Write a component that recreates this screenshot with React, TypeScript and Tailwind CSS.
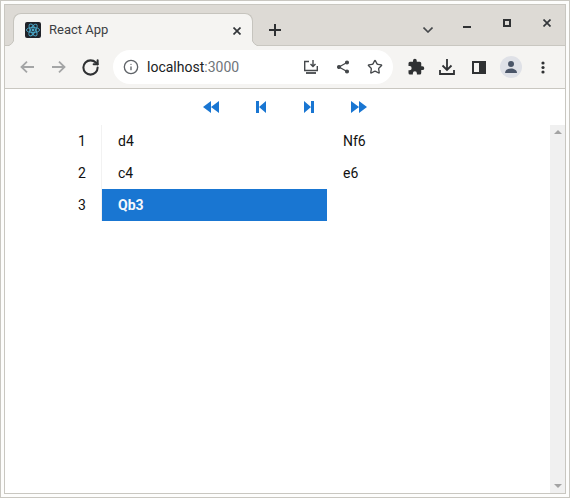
import React from 'react';
import { RotateCw, Info, Star } from 'lucide-react';

const moves = [
    { n: 1, white: 'd4', black: 'Nf6' },
    { n: 2, white: 'c4', black: 'e6' },
    { n: 3, white: 'Qb3', black: '' },
];

const ReactLogo = () => (
    <svg width="16" height="16" viewBox="0 0 16 16" fill="none" stroke="#4aa8c9" strokeWidth="0.9">
        <ellipse cx="8" cy="8" rx="6.6" ry="2.6" />
        <ellipse cx="8" cy="8" rx="6.6" ry="2.6" transform="rotate(60 8 8)" />
        <ellipse cx="8" cy="8" rx="6.6" ry="2.6" transform="rotate(120 8 8)" />
        <circle cx="8" cy="8" r="1.4" fill="#4aa8c9" stroke="none" />
    </svg>
);

const Cross = ({ size, className }: { size: number; className?: string }) => (
    <svg width={size} height={size} viewBox="0 0 8 8" className={className} fill="none" stroke="#33363a" strokeWidth="1.7">
        <path d="M0.5 0.5l7 7M7.5 0.5l-7 7" />
    </svg>
);

// 24px box like the MUI icon buttons, glyph drawn in the middle
const NavIcon = ({ d, className }: { d: string; className?: string }) => (
    <svg width="24" height="24" viewBox="0 0 24 24" fill="#1976d2" className={className}>
        <path d={d} />
    </svg>
);

const App: React.FC = () => {
    return (
        <div className="w-[570px] h-[498px] overflow-hidden bg-[#fdfdfc] border border-[#c9c7c1] p-[3px] font-['Roboto',sans-serif]">
            <div className="h-[490px] border border-[#c9c7c1] flex flex-col bg-white">
                {/* tabs */}
                <div className="h-[40px] shrink-0 bg-[#dddad5] flex items-end pl-[8px]">
                    <div className="relative z-10 -mb-px w-[240px] h-[33px] bg-[#f5f4f2] rounded-t-lg border border-b-0 border-[#c6c4be] flex items-center pl-[11px] text-[#3c4043]">
                        <svg className="absolute -left-2 bottom-0" width="8" height="8" viewBox="0 0 8 8">
                            <path d="M8 0v8H0a8 8 0 0 0 8-8z" fill="#f5f4f2" />
                            <path d="M0 8a8 8 0 0 0 8-8" fill="none" stroke="#c6c4be" />
                        </svg>
                        <svg className="absolute -right-2 bottom-0" width="8" height="8" viewBox="0 0 8 8">
                            <path d="M0 0v8h8a8 8 0 0 1-8-8z" fill="#f5f4f2" />
                            <path d="M8 8a8 8 0 0 1-8-8" fill="none" stroke="#c6c4be" />
                        </svg>
                        <div className="w-4 h-4 bg-[#20232a] rounded-[2px] flex items-center justify-center">
                            <ReactLogo />
                        </div>
                        <span className="ml-2 text-[13px]">React App</span>
                        <Cross size={8} className="ml-auto mr-[11px] mb-[-1px]" />
                    </div>
                    <svg className="ml-[16px] mb-[9px]" width="12" height="12" viewBox="0 0 12 12" fill="#2f3133">
                        <path d="M5 0h2v5h5v2H7v5H5V7H0V5h5z" />
                    </svg>
                    <svg className="ml-[142px] mb-[12px]" width="10" height="6" viewBox="0 0 10 6" fill="none" stroke="#45484b" strokeWidth="1.6">
                        <path d="M0.5 0.5L5 5l4.5-4.5" />
                    </svg>
                    <div className="ml-[30px] mb-[17px] w-2 h-[2px] bg-[#2f3133]" />
                    <div className="ml-[32px] mb-[18px] w-2 h-2 border-2 border-[#2f3133]" />
                    <Cross size={8} className="ml-[32px] mb-[18px]" />
                </div>
                {/* toolbar */}
                <div className="h-[44px] shrink-0 bg-[#f5f4f2] border-t border-b border-[#c9c7c1] flex items-center pl-[15px]">
                    <svg width="14" height="12" viewBox="0 0 14 12" fill="none" stroke="#a4a5a6" strokeWidth="1.8">
                        <path d="M14 6H1.5M7 0.7L1.5 6 7 11.3" />
                    </svg>
                    <svg className="ml-[18px]" width="14" height="12" viewBox="0 0 14 12" fill="none" stroke="#a4a5a6" strokeWidth="1.8">
                        <path d="M0 6h12.5M7 0.7L12.5 6 7 11.3" />
                    </svg>
                    <RotateCw size={19} strokeWidth={2.6} className="ml-[15px] text-[#2f3133]" />
                    <div className="ml-[13px] w-[280px] h-[34px] bg-white rounded-full flex items-center pl-[10px] pr-[10px]">
                        <Info size={16} strokeWidth={2} className="text-[#5f6368]" />
                        <span className="ml-[8px] text-sm text-[#202124]">
                            localhost<span className="text-[#70757a]">:3000</span>
                        </span>
                        <div className="ml-auto flex items-center gap-4 text-[#45484b]">
                            <svg width="16" height="16" viewBox="0 0 16 16" fill="none" stroke="#45484b" strokeWidth="1.4">
                                <path d="M6 2.5H1.7v9h12.6V7" />
                                <path d="M10 1v6M7.5 5L10 7.5 12.5 5" />
                                <path d="M3 14h10" strokeWidth="1.8" />
                            </svg>
                            <svg width="16" height="16" viewBox="0 0 16 16" fill="#45484b" stroke="#45484b" strokeWidth="1.3">
                                <path d="M12 3.5L4 8l8 4.5" fill="none" />
                                <circle cx="12" cy="3.5" r="1.4" />
                                <circle cx="4" cy="8" r="1.4" />
                                <circle cx="12" cy="12.5" r="1.4" />
                            </svg>
                            <Star size={16} strokeWidth={2} />
                        </div>
                    </div>
                    <svg className="ml-[14px]" width="18" height="18" viewBox="0 0 24 24" fill="#2f3133">
                        <path d="M20.5 11H19V7a2 2 0 0 0-2-2h-4V3.5a2.5 2.5 0 0 0-5 0V5H4a2 2 0 0 0-2 2v3.8h1.5a2.7 2.7 0 0 1 0 5.4H2V20a2 2 0 0 0 2 2h3.8v-1.5a2.7 2.7 0 0 1 5.4 0V22H17a2 2 0 0 0 2-2v-4h1.5a2.5 2.5 0 0 0 0-5z" />
                    </svg>
                    <svg className="ml-[14px]" width="16" height="16" viewBox="0 0 16 16" fill="none" stroke="#2f3133" strokeWidth="1.8">
                        <path d="M8 0v10.5M3.5 6.5L8 11l4.5-4.5" />
                        <path d="M1 11v4h14v-4" />
                    </svg>
                    <div className="ml-[17px] w-[14px] h-[13px] border-2 border-[#2f3133] flex justify-end">
                        <div className="w-[5px] bg-[#2f3133]" />
                    </div>
                    <div className="ml-[14px] w-[22px] h-[22px] rounded-full bg-[#dfe1e7] flex items-center justify-center">
                        <svg width="14" height="14" viewBox="0 0 14 14" fill="#4a5568">
                            <circle cx="7" cy="4" r="3" />
                            <path d="M1 13c0-3 3-4.5 6-4.5s6 1.5 6 4.5z" />
                        </svg>
                    </div>
                    <svg className="ml-[19px]" width="4" height="13" viewBox="0 0 4 13" fill="#2f3133">
                        <circle cx="2" cy="2" r="1.6" />
                        <circle cx="2" cy="6.5" r="1.6" />
                        <circle cx="2" cy="11" r="1.6" />
                    </svg>
                </div>
                {/* page */}
                <div className="flex-1 min-h-0 flex flex-col">
                    <div className="h-[36px] shrink-0 flex items-center pl-[194px]">
                        <NavIcon d="M12 6v12L4 12zM20 6v12l-8-6z" />
                        <NavIcon className="ml-[26px]" d="M7 6h3v12H7zM10 12l7-6v12z" />
                        <NavIcon className="ml-[24px]" d="M14 6h3v12h-3zM14 12L7 6v12z" />
                        <NavIcon className="ml-[26px]" d="M4 6v12l8-6zM12 6v12l8-6z" />
                    </div>
                    <div className="flex-1 min-h-0 flex">
                        <div className="flex-1 pl-[58px]">
                            {moves.map((m) => (
                                <div key={m.n} className="flex h-8 text-sm leading-8 text-[#111111]">
                                    <div className="w-[39px] border-r border-[#f2f2f2] text-center">{m.n}</div>
                                    <div className={m.n === 3 ? 'w-[225px] pl-4 bg-[#1976d2] text-[#f5f8fc] font-bold' : 'w-[225px] pl-4'}>{m.white}</div>
                                    <div className="pl-4">{m.black}</div>
                                </div>
                            ))}
                        </div>
                        <div className="w-[15px] bg-[#f0f0f0] flex flex-col justify-between items-center py-[5px]">
                            <div className="w-0 h-0 border-x-[4px] border-x-transparent border-b-[4px] border-b-[#a3a3a3]" />
                            <div className="w-0 h-0 border-x-[4px] border-x-transparent border-t-[4px] border-t-[#a3a3a3]" />
                        </div>
                    </div>
                </div>
            </div>
        </div>
    );
};

export default App;
